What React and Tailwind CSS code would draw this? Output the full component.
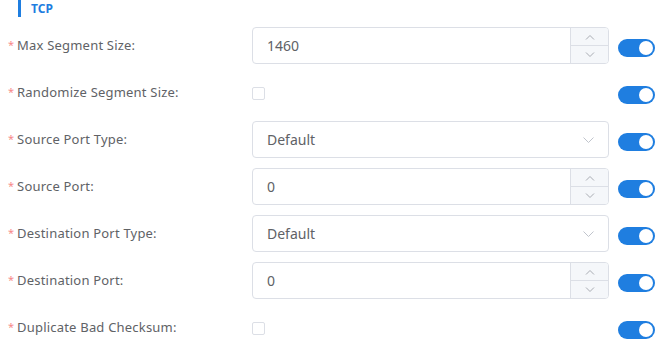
import React from 'react';

const rows = [
  { label: 'Max Segment Size:', type: 'number', value: '1460' },
  { label: 'Randomize Segment Size:', type: 'checkbox' },
  { label: 'Source Port Type:', type: 'select', value: 'Default' },
  { label: 'Source Port:', type: 'number', value: '0' },
  { label: 'Destination Port Type:', type: 'select', value: 'Default' },
  { label: 'Destination Port:', type: 'number', value: '0' },
  { label: 'Duplicate Bad Checksum:', type: 'checkbox' },
];

const Chevron = ({ up }) => (
  <svg width="10" height="6" viewBox="0 0 10 6" fill="none" stroke="#a8abb2" strokeWidth="1">
    {up ? <path d="M1 5.5 L5 1.5 L9 5.5" /> : <path d="M1 0.5 L5 4.5 L9 0.5" />}
  </svg>
);

const Toggle = () => (
  <div className="w-[37px] h-[18px] rounded-full bg-[#1f7ee0] flex items-center justify-end pr-[2px] mt-[12px]">
    <div className="w-[14px] h-[14px] rounded-full bg-white" />
  </div>
);

const Field = ({ row }) => {
  if (row.type === 'checkbox') {
    return (
      <div className="h-[37px] flex items-center pt-[2px]">
        <div className="w-[13px] h-[13px] border border-[#dcdfe6] rounded-[2px] bg-white" />
      </div>
    );
  }
  if (row.type === 'select') {
    return (
      <div className="h-[37px] w-[357px] border border-[#dcdfe6] rounded-[4px] flex items-center justify-between pl-[14px] pr-[14px] bg-white">
        <span className="text-[14px] text-[#606266]">{row.value}</span>
        <svg width="11" height="6" viewBox="0 0 11 6" fill="none" stroke="#c0c4cc" strokeWidth="1">
          <path d="M0.5 0.5 L5.5 5.5 L10.5 0.5" />
        </svg>
      </div>
    );
  }
  return (
    <div className="h-[37px] w-[357px] border border-[#dcdfe6] rounded-[4px] flex bg-white overflow-hidden">
      <div className="flex-1 flex items-center pl-[14px] text-[14px] text-[#606266]">{row.value}</div>
      <div className="w-[38px] border-l border-[#dcdfe6] bg-[#f5f7fa] flex flex-col">
        <div className="flex-1 flex items-center justify-center border-b border-[#dcdfe6]">
          <Chevron up />
        </div>
        <div className="flex-1 flex items-center justify-center">
          <Chevron />
        </div>
      </div>
    </div>
  );
};

export default function App() {
  return (
    <div className="w-[667px] h-[360px] bg-white overflow-hidden" style={{ fontFamily: '"Noto Sans", "Open Sans", sans-serif' }}>
      <div className="flex items-center h-[17px] pl-[18px]">
        <div className="w-[3px] h-[17px] bg-[#1f7ee0]" />
        <span className="ml-[10px] text-[12px] font-bold text-[#1f7ee0] leading-none">TCP</span>
      </div>
      <div className="flex flex-col gap-[10px] pt-[10px]">
        {rows.map((row) => (
          <div key={row.label} className="flex items-start">
            <div className="w-[252px] h-[37px] flex items-center pl-[8px] text-[13px] text-[#606266]">
              <span className="text-[#f78989] mr-[3px] text-[11px]">*</span>
              <span className="tracking-[0.2px]">{row.label}</span>
            </div>
            <div className="w-[366px]">
              <Field row={row} />
            </div>
            <Toggle />
          </div>
        ))}
      </div>
    </div>
  );
}
